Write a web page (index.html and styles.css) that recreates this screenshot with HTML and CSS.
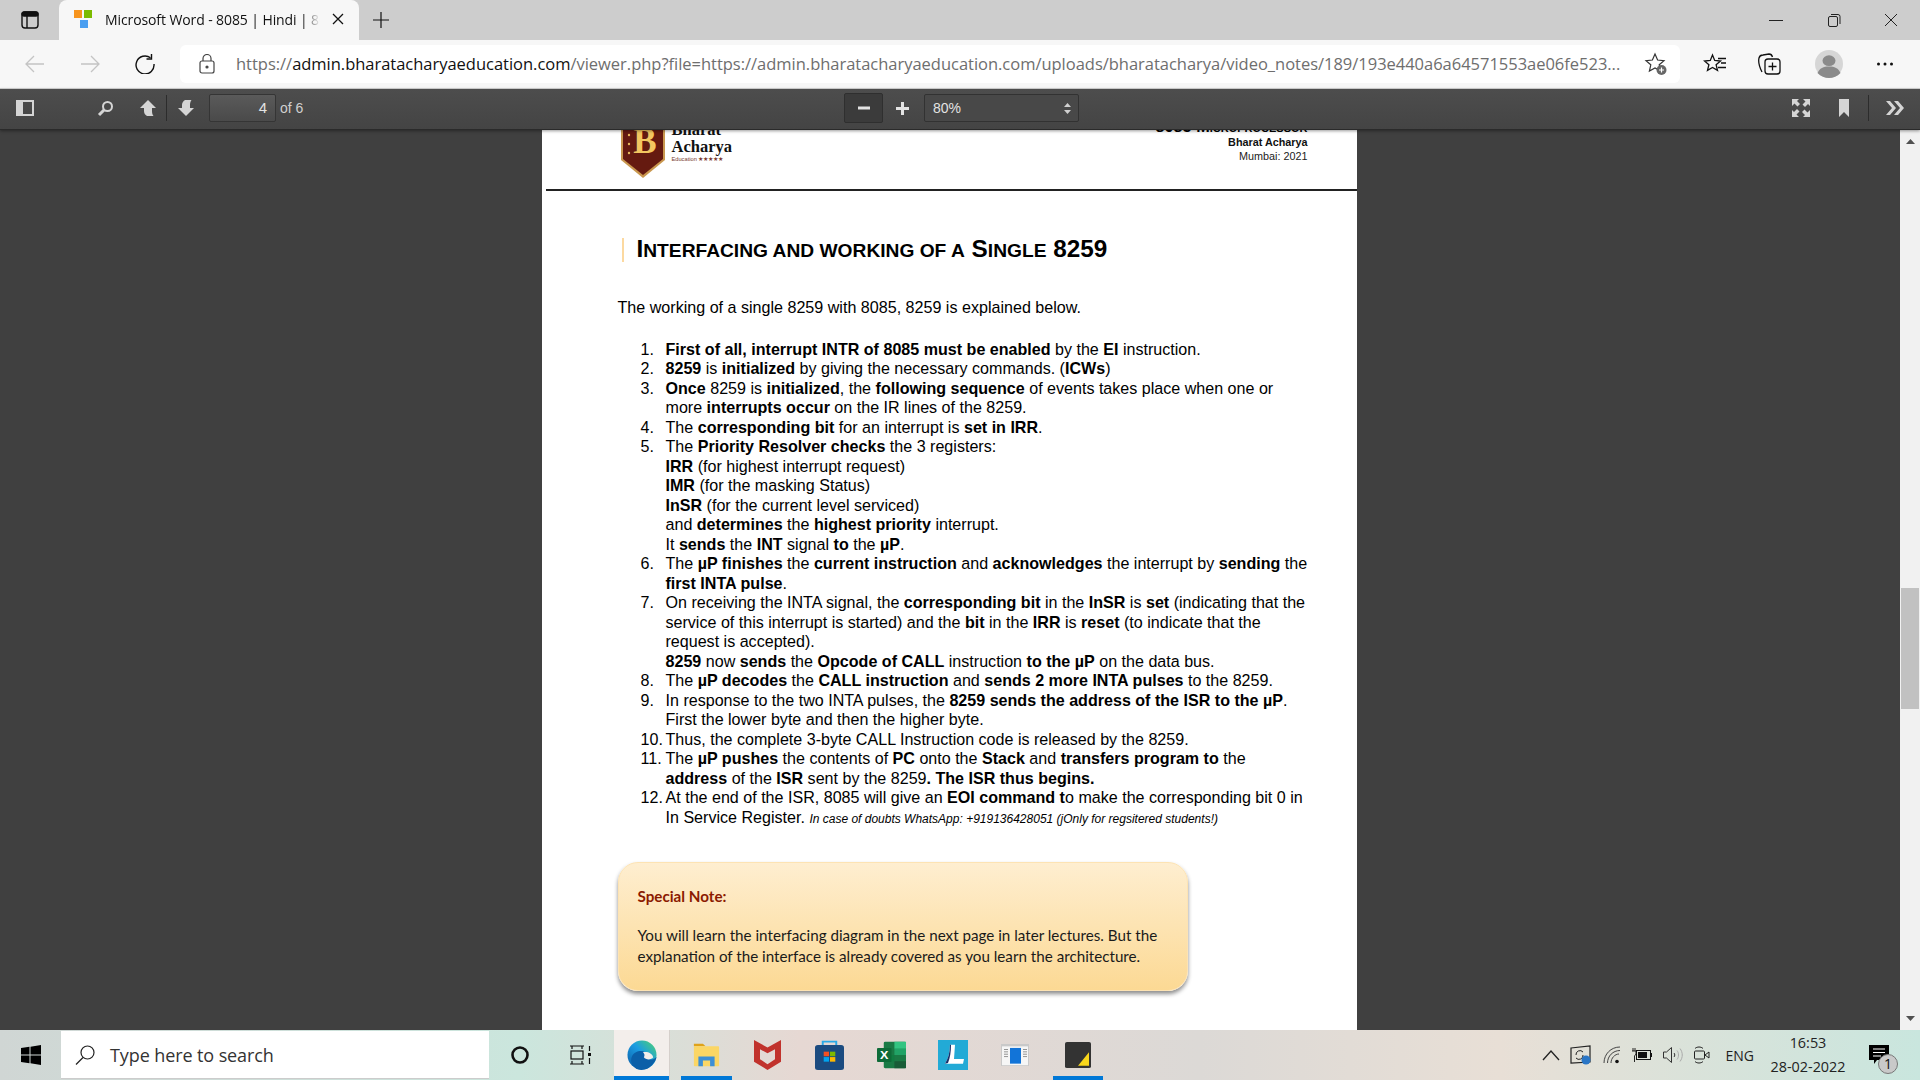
FILE: index.html
```html
<!DOCTYPE html>
<html lang="en">
<head>
<meta charset="utf-8">
<title>Microsoft Word - 8085 | Hindi</title>
<link rel="stylesheet" href="styles.css">
</head>
<body>
<div class="tabstrip">
  <div class="strip-btn">
    <svg width="18" height="18" viewBox="0 0 18 18" fill="none" stroke="#111" stroke-width="1.4"><rect x="1" y="1" width="16" height="16" rx="3"/><rect x="1" y="1" width="16" height="4" rx="2" fill="#111"/><path d="M6 4v13"/></svg>
  </div>
  <div class="tab">
    <svg class="favicon" width="18" height="18" viewBox="0 0 18 18"><rect width="8" height="8" fill="#f7941d"/><rect x="10" width="8" height="8" fill="#7cbb00"/><rect x="6" y="10" width="8" height="8" fill="#4a9ef0"/></svg>
    <span class="tab-title">Microsoft Word - 8085 | Hindi | 8085 Microprocessor</span>
    <svg width="12" height="12" viewBox="0 0 12 12" stroke="#111" stroke-width="1.3"><path d="M1 1l10 10M11 1L1 11"/></svg>
  </div>
  <div class="new-tab">
    <svg width="18" height="18" viewBox="0 0 18 18" stroke="#111" stroke-width="1.2"><path d="M9 1v16M1 9h16"/></svg>
  </div>
  <div class="window-btns">
    <svg width="14" height="14" viewBox="0 0 14 14" stroke="#222"><path d="M0 7.5h14"/></svg>
    <svg width="14" height="14" viewBox="0 0 14 14" fill="none" stroke="#222"><rect x="1.5" y="3.5" width="9" height="10" rx="1.5"/><path d="M4 1.5h7a2 2 0 0 1 2 2V11"/></svg>
    <svg width="14" height="14" viewBox="0 0 14 14" stroke="#222"><path d="M1 1l12 12M13 1L1 13"/></svg>
  </div>
</div>

<div class="navbar">
  <div class="nav-btns">
    <svg width="20" height="20" viewBox="0 0 20 20" fill="none" stroke="#c4c4c4" stroke-width="1.3"><path d="M19 10H1M9 2l-8 8 8 8"/></svg>
    <svg width="20" height="20" viewBox="0 0 20 20" fill="none" stroke="#c4c4c4" stroke-width="1.3"><path d="M1 10h18M11 2l8 8-8 8"/></svg>
    <svg width="20" height="20" viewBox="0 0 20 20" fill="none" stroke="#111" stroke-width="1.4"><path d="M15.5 3.8A9 9 0 1 0 19 10"/><path d="M16.5 0v5h-5"/></svg>
  </div>
  <div class="addressbar">
    <svg class="lock" width="16" height="20" viewBox="0 0 16 20" fill="none" stroke="#444" stroke-width="1.2"><rect x="1" y="7" width="14" height="12" rx="2"/><path d="M4 7V4.500a4 4 0 0 1 8 0V7"/><circle cx="8" cy="13" r="1" fill="#444"/></svg>
    <span class="url"><span class="url-dim">https://</span><span class="url-host">admin.bharatacharyaeducation.com</span><span class="url-dim">/viewer.php?file=https://admin.bharatacharyaeducation.com/uploads/bharatacharya/video_notes/189/193e440a6a64571553ae06fe523...</span></span>
    <svg class="star-add" width="24" height="24" viewBox="0 0 24 24" fill="none" stroke="#333" stroke-width="1.2"><path d="M11 2l2.600 6 6.400.6-4.800 4.200 1.400 6.200L11 16l-5.600 3 1.400-6.200L2 8.600 8.400 8z"/><circle cx="17.500" cy="18" r="5" fill="#666" stroke="none"/><path d="M17.500 15.500v5M15 18h5" stroke="#fff"/></svg>
  </div>
  <div class="nav-tools">
    <svg width="24" height="24" viewBox="0 0 24 24" fill="none" stroke="#111" stroke-width="1.3"><path d="M9.500 3l2.200 5.500 5.800.5-4.400 3.700 1.400 5.700-5-3-5 3 1.400-5.700L1.500 9l5.800-.5z"/><path d="M15 6.500h8M18 11h5M15 15.500h8"/></svg>
    <svg class="tool-collections" width="24" height="24" viewBox="0 0 24 24" fill="none" stroke="#111" stroke-width="1.3"><path d="M5 20C3 16 1 10 2 6c.5-2 2-3 4-3l6-1c2 0 3 1 3.500 3"/><rect x="8" y="7" width="15" height="15" rx="3" fill="#f7f7f7"/><path d="M15.500 10.500v8M11.500 14.500h8"/></svg>
    <svg class="tool-profile" width="28" height="28" viewBox="0 0 28 34" preserveAspectRatio="none"><ellipse cx="14" cy="17" rx="14" ry="17" fill="#d6d6d6"/><circle cx="14" cy="13" r="6.500" fill="#8a8a8a"/><path d="M2.500 28c2-6 6-8 11.500-8s9.500 2 11.500 8c-3 4-7.500 6-11.500 6s-8.500-2-11.500-6z" fill="#8a8a8a"/></svg>
    <svg width="18" height="4" viewBox="0 0 18 4" fill="#111"><circle cx="2.500" cy="2" r="1.500"/><circle cx="9" cy="2" r="1.500"/><circle cx="15.500" cy="2" r="1.500"/></svg>
  </div>
</div>

<div class="pdfbar">
  <svg class="pb-sidebar" width="18" height="16" viewBox="0 0 18 16"><rect x="1" y="1" width="16" height="14" fill="none" stroke="#d5d5d5" stroke-width="2"/><rect x="2" y="2" width="5" height="12" fill="#d5d5d5"/></svg>
  <svg class="pb-search" width="17" height="17" viewBox="0 0 17 17" fill="none" stroke="#d5d5d5"><circle cx="10.500" cy="6.500" r="4.500" stroke-width="2"/><path d="M7 10l-5 5" stroke-width="3"/></svg>
  <svg class="pb-up" width="18" height="18" viewBox="0 0 18 18" fill="#d5d5d5"><path d="M9 1l8 8h-4v3c0 2 .5 4 1.500 5H8c-2-1-3-3-3-5V9H1z"/></svg>
  <span class="pb-sep"></span>
  <svg class="pb-down" width="18" height="18" viewBox="0 0 18 18" fill="#d5d5d5"><path d="M9 17l8-8h-4V6c0-2 .5-4 1.500-5H8C6 2 5 4 5 6v3H1z"/></svg>
  <div class="page-input">4</div>
  <span class="page-of">of 6</span>
  <div class="zoom-out"><svg width="12" height="4" viewBox="0 0 12 4" fill="#e3e3e3"><rect width="12" height="3" y=".5"/></svg></div>
  <div class="zoom-in"><svg width="13" height="13" viewBox="0 0 13 13" fill="#e3e3e3"><path d="M5 0h3v5h5v3H8v5H5V8H0V5h5z"/></svg></div>
  <div class="zoom-select"><span>80%</span><svg width="7" height="11" viewBox="0 0 7 11" fill="#d0d0d0"><path d="M3.500 0L7 4H0zM3.500 11L0 7h7z"/></svg></div>
  <div class="pb-right">
    <svg width="18" height="18" viewBox="0 0 18 18" fill="#d5d5d5"><path d="M0 0h7L5 2l3 3-2.500 2.500L2.500 4.500 0 7zM18 0v7l-2-2-3 3-2.500-2.500 3-3L11 0zM0 18v-7l2 2 3-3 2.500 2.500-3 3L7 18zM18 18h-7l2-2-3-3 2.500-2.500 3 3L18 11z"/></svg>
    <svg class="pb-bookmark" width="12" height="18" viewBox="0 0 12 18" fill="#d5d5d5"><path d="M1 0h10v18l-5-5-5 5z"/></svg>
    <span class="pb-sep"></span>
    <svg class="pb-more" width="18" height="16" viewBox="0 0 18 16" fill="#d5d5d5"><path d="M0 1h4l6 7-6 7H0l6-7zM8 1h4l6 7-6 7H8l6-7z"/></svg>
  </div>
</div>

<div class="viewer">
  <main class="canvas">
    <article class="page">
      <header class="page-head">
        <div class="brand">
          <svg width="44" height="68" viewBox="0 0 44 68"><path d="M0 0h44v50L22 68 0 50z" fill="#c9974e"/><path d="M2 0h40v49L22 65 2 49z" fill="#651a10"/><circle cx="8" cy="34" r="1.200" fill="#e8b95e"/><circle cx="8" cy="25" r="1.200" fill="#e8b95e"/><circle cx="8" cy="43" r="1.200" fill="#e8b95e"/><text x="24" y="43" text-anchor="middle" class="logo-b">B</text></svg>
          <div class="brand-text">
            <div>Bharat</div>
            <div>Acharya</div>
            <div class="brand-sub">Education ★★★★★</div>
          </div>
        </div>
        <div class="head-right">
          <div class="head-title">8085 Microprocessor</div>
          <div class="head-name">Bharat Acharya</div>
          <div>Mumbai: 2021</div>
        </div>
      </header>
      <h1 class="title">I<span class="sc">nterfacing and working of a</span> S<span class="sc">ingle</span> 8259</h1>
      <p class="intro">The working of a single 8259 with 8085, 8259 is explained below.</p>
      <ol class="steps">
        <li><span class="n">1.</span><div><b>First of all, interrupt INTR of 8085 must be enabled</b> by the <b>EI</b> instruction.</div></li>
        <li><span class="n">2.</span><div><b>8259</b> is <b>initialized</b> by giving the necessary commands. (<b>ICWs</b>)</div></li>
        <li><span class="n">3.</span><div><b>Once</b> 8259 is <b>initialized</b>, the <b>following sequence</b> of events takes place when one or<br>more <b>interrupts occur</b> on the IR lines of the 8259.</div></li>
        <li><span class="n">4.</span><div>The <b>corresponding bit</b> for an interrupt is <b>set in IRR</b>.</div></li>
        <li><span class="n">5.</span><div>The <b>Priority Resolver checks</b> the 3 registers:<br><b>IRR</b> (for highest interrupt request)<br><b>IMR</b> (for the masking Status)<br><b>InSR</b> (for the current level serviced)<br>and <b>determines</b> the <b>highest priority</b> interrupt.<br>It <b>sends</b> the <b>INT</b> signal <b>to</b> the <b>µP</b>.</div></li>
        <li><span class="n">6.</span><div>The <b>µP finishes</b> the <b>current instruction</b> and <b>acknowledges</b> the interrupt by <b>sending</b> the<br><b>first INTA pulse</b>.</div></li>
        <li><span class="n">7.</span><div>On receiving the INTA signal, the <b>corresponding bit</b> in the <b>InSR</b> is <b>set</b> (indicating that the<br>service of this interrupt is started) and the <b>bit</b> in the <b>IRR</b> is <b>reset</b> (to indicate that the<br>request is accepted).<br><b>8259</b> now <b>sends</b> the <b>Opcode of CALL</b> instruction <b>to the µP</b> on the data bus.</div></li>
        <li><span class="n">8.</span><div>The <b>µP decodes</b> the <b>CALL instruction</b> and <b>sends 2 more INTA pulses</b> to the 8259.</div></li>
        <li><span class="n">9.</span><div>In response to the two INTA pulses, the <b>8259 sends the address of the ISR to the µP</b>.<br>First the lower byte and then the higher byte.</div></li>
        <li><span class="n">10.</span><div>Thus, the complete 3-byte CALL Instruction code is released by the 8259.</div></li>
        <li><span class="n">11.</span><div>The <b>µP pushes</b> the contents of <b>PC</b> onto the <b>Stack</b> and <b>transfers program to</b> the<br><b>address</b> of the <b>ISR</b> sent by the 8259<b>. The ISR thus begins.</b></div></li>
        <li><span class="n">12.</span><div>At the end of the ISR, 8085 will give an <b>EOI command t</b>o make the corresponding bit 0 in<br>In Service Register. <i class="small">In case of doubts WhatsApp: +919136428051 (jOnly for regsitered students!)</i></div></li>
      </ol>
      <aside class="note">
        <div class="note-head">Special Note:</div>
        <p>You will learn the interfacing diagram in the next page in later lectures. But the<br>explanation of the interface is already covered as you learn the architecture.</p>
      </aside>
    </article>
  </main>
  <div class="scrollbar">
    <svg width="9" height="5" viewBox="0 0 9 5" fill="#505050"><path d="M4.500 0L9 5H0z"/></svg>
    <div class="scroll-track"><div class="thumb"></div></div>
    <svg width="9" height="5" viewBox="0 0 9 5" fill="#505050"><path d="M4.500 5L0 0h9z"/></svg>
  </div>
</div>

<footer class="taskbar">
  <div class="start"><svg width="20" height="20" viewBox="0 0 20 20" fill="#000"><path d="M0 3l8.500-1.200v7.700H0zM9.500 1.700L20 0v9.500H9.500zM0 10.500h8.500v7.700L0 17zM9.500 10.500H20V20L9.500 18.300z"/></svg></div>
  <div class="searchbox">
    <svg width="20" height="20" viewBox="0 0 20 20" fill="none" stroke="#222" stroke-width="1.200"><circle cx="12.500" cy="7.500" r="6.500"/><path d="M8 12.500L1 19.500"/></svg>
    <span>Type here to search</span>
  </div>
  <div class="tb-fixed tb-cortana"><svg width="20" height="20" viewBox="0 0 20 20" fill="none" stroke="#111" stroke-width="2.600"><circle cx="10" cy="10" r="7.500"/></svg></div>
  <div class="tb-fixed tb-view"><svg width="24" height="20" viewBox="0 0 24 20" fill="none" stroke="#111" stroke-width="1.200"><path d="M1 1h14M1 19h14M3 1v3M13 1v3M3 16v3M13 16v3"/><rect x="2" y="6" width="12" height="8"/><path d="M20.500 1v5M20.500 13v6"/><rect x="19" y="8" width="3" height="3" fill="#111" stroke="none"/></svg></div>
  <div class="app active-tile"><svg width="30" height="30" viewBox="0 0 32 32"><defs><linearGradient id="eg" x1="0" y1="1" x2="1" y2="0"><stop offset="0" stop-color="#0c59a4"/><stop offset=".55" stop-color="#1b9de2"/><stop offset="1" stop-color="#52d66a"/></linearGradient></defs><circle cx="16" cy="16" r="15.500" fill="url(#eg)"/><path d="M12 31.500C6 29 3 23 5 18c2-5 8-7 12-6s5 5 3 7c3 3 9 2 11.500-1-1 6-7 12-13 13.500-2 .5-4.500.500-6.500 0z" fill="#0b5fa8"/><path d="M17 13c5-1 10 1 11 5.500-2 3-8 3-10 0 1-2 1-3.500-1-5.500z" fill="#f3eeeb"/></svg></div>
  <div class="app running"><svg width="27" height="24" viewBox="0 0 30 30" preserveAspectRatio="none"><path d="M1 1h10l3 3H1z" fill="#dfa21a"/><rect x="1" y="4" width="28" height="25" rx="1" fill="#fbd665"/><path d="M6 29V17h18v12h-5v-7h-8v7z" fill="#3d8fd6"/></svg></div>
  <div class="app"><svg width="27" height="30" viewBox="0 0 27 36" preserveAspectRatio="none"><path fill-rule="evenodd" d="M0 0l13.500 9L27 0v26L13.500 36 0 26zM6 11v12l7.500 6 7.500-6V11l-7.500 5z" fill="#c1322c"/></svg></div>
  <div class="app"><svg width="29" height="30" viewBox="0 0 30 36" preserveAspectRatio="none"><path d="M8 6V2h14v4" fill="none" stroke="#2aa9e6" stroke-width="2"/><rect y="6" width="30" height="30" rx="3" fill="#1b4b80"/><rect x="9" y="14" width="5.500" height="5.500" fill="#f25022"/><rect x="15.500" y="14" width="5.500" height="5.500" fill="#7fba00"/><rect x="9" y="20.500" width="5.500" height="5.500" fill="#00a4ef"/><rect x="15.500" y="20.500" width="5.500" height="5.500" fill="#ffb900"/></svg></div>
  <div class="app"><svg width="29" height="28" viewBox="0 0 30 36" preserveAspectRatio="none"><rect x="7" y="1" width="23" height="34" rx="1.500" fill="#1a7a45"/><rect x="18" y="1" width="12" height="9" fill="#33c481"/><rect x="18" y="10" width="12" height="8" fill="#21a366"/><rect x="7" y="18" width="11" height="8" fill="#107c41"/><rect x="18" y="26" width="12" height="9" fill="#185c37"/><rect y="9" width="15" height="18" rx="1" fill="#0e6b38"/><text x="7.500" y="23" text-anchor="middle" class="x-glyph">X</text></svg></div>
  <div class="app"><svg width="30" height="30" viewBox="0 0 30 38" preserveAspectRatio="none"><rect width="30" height="38" fill="#22aad6"/><path d="M12 6h5l-1 18h10l-1 6H7c3-6 5-14 5-24z" fill="#fff"/><path d="M12 6c0 10-2 18-5 24l3-1c2-6 3-14 3-23z" fill="#17306b"/></svg></div>
  <div class="app"><svg width="28" height="22" viewBox="0 0 28 28" preserveAspectRatio="none"><rect width="28" height="28" fill="#c9c9c9"/><rect x="1" y="3" width="26" height="24" fill="#f6f6f6"/><rect x="9" y="5" width="11" height="20" fill="#1274d8"/><path d="M3 7h4M3 10h4M3 13h4M3 16h4M22 7h4M22 10h4M22 13h4M22 16h4" stroke="#888"/></svg></div>
  <div class="app running-wide"><svg width="26" height="26" viewBox="0 0 26 33" preserveAspectRatio="none"><rect width="26" height="33" rx="2" fill="#333"/><path d="M13 30L24 13v17z" fill="#f9d71c"/></svg></div>
  <div class="tray">
    <svg width="20" height="12" viewBox="0 0 20 12" fill="none" stroke="#222" stroke-width="1.300"><path d="M2 11l8-9 8 9"/></svg>
    <svg class="tray-monitor" width="22" height="20" viewBox="0 0 22 20"><path d="M1 3l19-2v16l-19 1z" fill="none" stroke="#222" stroke-width="1.200"/><path d="M6 10a4 4 0 0 1 7-3M13 10a4 4 0 0 1-7 3" fill="none" stroke="#222"/><circle cx="16" cy="15" r="4.500" fill="#2a76c6"/></svg>
    <svg width="18" height="18" viewBox="0 0 18 18" fill="none" stroke="#444"><path d="M1 17C1 8 8 1 17 1M4.500 17C4.500 10 10 4.500 17 4.500M8 17c0-5 4-9 8-9"/><circle cx="14" cy="15.500" r="1.800" fill="#111" stroke="none"/></svg>
    <svg width="20" height="14" viewBox="0 0 20 14"><path d="M3 0v3M1 0v3M0 3h4v3L2.500 8v6" fill="none" stroke="#111" stroke-width=".9"/><rect x="4.500" y="2.500" width="14" height="9" fill="none" stroke="#111"/><rect x="6" y="4" width="9" height="6" fill="#111"/><rect x="19" y="5" width="1" height="4" fill="#111"/></svg>
    <svg width="20" height="18" viewBox="0 0 20 18" fill="none" stroke="#333"><path d="M.5 6v6h3l5 4.500v-15l-5 4.500z"/><path d="M11 7c1 1 1 3 0 4"/><path d="M14 4.500c2 2.500 2 6.500 0 9M17 2.500c3 4 3 9 0 13" stroke="#aaa"/></svg>
    <svg width="16" height="18" viewBox="0 0 16 18" fill="none" stroke="#222"><path d="M1 2.500C3 .5 7 .5 9 2.500M1 15.500c2 2 6 2 8 0"/><rect x=".5" y="5" width="10" height="8" rx="1"/><path d="M11 9l4-3v6z"/></svg>
    <span class="lang">ENG</span>
    <div class="clock"><div>16:53</div><div>28-02-2022</div></div>
    <div class="notif">
      <svg width="20" height="20" viewBox="0 0 20 20"><path d="M0 0h20v15H8l-3 4v-4H0z" fill="#000"/><path d="M4 4h12M4 7.500h12M4 11h8" stroke="#fff"/></svg>
      <span class="notif-badge">1</span>
    </div>
  </div>
</footer>
</body>
</html>
```

FILE: styles.css
```css
* { box-sizing: border-box; }
html, body { margin: 0; height: 100%; }
body {
  width: 1920px; height: 1080px; overflow: hidden;
  display: flex; flex-direction: column;
  font-family: "Liberation Sans", Arial, sans-serif;
  background: #404040;
}
svg { display: block; flex: none; }

/* tab strip */
.tabstrip { height: 40px; flex: none; background: #cdcdcd; display: flex; align-items: stretch; }
.strip-btn { width: 59px; display: flex; align-items: center; justify-content: center; padding-left: 1px; }
.tab {
  width: 300px; background: #f7f7f7; border-radius: 8px 8px 0 0;
  display: flex; align-items: center; padding: 0 15px 2px 15px;
}
.favicon { margin-right: 13px; }
.tab-title {
  width: 215px; margin-right: 12px; white-space: nowrap; overflow: hidden;
  font: 14px "Open Sans", sans-serif; color: #111; letter-spacing: -.1px;
  -webkit-mask-image: linear-gradient(90deg, #000 92%, transparent);
  mask-image: linear-gradient(90deg, #000 92%, transparent);
}
.new-tab { width: 44px; display: flex; align-items: center; justify-content: center; }
.window-btns { margin-left: auto; display: flex; align-items: center; gap: 43.500px; padding-right: 22px; }

/* nav bar */
.navbar { height: 48px; flex: none; background: #f7f7f7; display: flex; align-items: center; }
.nav-btns { width: 180px; display: flex; gap: 35px; padding-left: 25px; }
.addressbar {
  width: 1500px; height: 38px; background: #fff; border-radius: 6px;
  display: flex; align-items: center; padding: 0 12px 0 19px;
}
.lock { margin-right: 21px; }
.url { flex: 1; white-space: nowrap; overflow: hidden; padding-bottom: 2px; font: 16.500px "Open Sans", sans-serif; letter-spacing: -.02px; }
.url-dim { color: #6e6e6e; }
.url-host { color: #111; }
.nav-tools { flex: 1; display: flex; align-items: center; justify-content: space-between; padding: 0 26px 0 23px; }
.tool-collections { margin-right: 3px; }
.tool-profile { margin-right: 3px; }

/* pdf toolbar */
.pdfbar {
  height: 41px; flex: none; display: flex; align-items: center; position: relative; z-index: 2;
  padding-bottom: 2px;
  background: linear-gradient(#4d4d4d, #444); box-shadow: 0 1px 0 #2a2a2a, 0 2px 3px rgba(0,0,0,.4);
  border-top: 1px solid #c8c8c8; color: #e3e3e3; font-size: 14px;
}
.pb-sidebar { margin-left: 16px; }
.pb-search { margin-left: 63px; }
.pb-up { margin-left: 25px; }
.pb-sep { width: 1px; height: 26px; background: #2c2c2c; margin: 0 10px 0 9px; }
.page-input {
  width: 67px; height: 28px; margin-left: 14px; padding-right: 8px; text-align: right; line-height: 26px;
  background: linear-gradient(#5a5a5a, #4a4a4a); border: 1px solid #353535; border-radius: 2px; font-size: 15px;
}
.page-of { margin-left: 4px; width: 61px; color: #d0d0d0; }
.zoom-out {
  margin-left: 503px; width: 39px; height: 30px; background: #3b3b3b; border: 1px solid #2f2f2f;
  border-radius: 2px; display: flex; align-items: center; justify-content: center;
}
.zoom-in { width: 41px; display: flex; justify-content: center; padding-right: 3px; }
.zoom-select {
  width: 155px; height: 28px; background: #484848; border: 1px solid #323232; border-radius: 2px;
  display: flex; align-items: center; justify-content: space-between; padding: 0 7px 0 8px; font-size: 14px;
}
.pb-right { margin-left: auto; display: flex; align-items: center; padding-right: 16px; }
.pb-bookmark { margin-left: 28px; }
.pb-right .pb-sep { margin: 0 17px 0 18.500px; }

/* viewer */
.viewer { flex: 1; min-height: 0; display: flex; justify-content: space-between; overflow: hidden; background: #404040; }
.canvas { width: 1898px; display: flex; justify-content: center; overflow: hidden; }
.page { width: 815px; background: #fff; color: #000; height: 1000px; }
.page-head {
  margin: -26px 0 0 4px; height: 88px; border-bottom: 2px solid #222;
  display: flex; justify-content: space-between; padding: 0 49px 0 75px;
}
.brand { display: flex; gap: 7px; padding-top: 7px; }
.logo-b { font: bold 35px "Liberation Serif", serif; fill: #f3c660; }
.x-glyph { font: bold 13px "Liberation Sans", sans-serif; fill: #fff; }
.brand-text { font: bold 16.500px/17px "Liberation Serif", serif; padding-top: 10.500px; color: #111; }
.brand-sub { font: 5.700px/10px "Liberation Sans", sans-serif; color: #7a3a30; margin-top: -.5px; }
.head-right { text-align: right; font-size: 10.800px; line-height: 13.500px; padding-top: 19px; color: #222; }
.head-title { font-weight: bold; font-variant: small-caps; font-size: 16.300px; line-height: 14px; color: #000; margin: -3px 0 3px; }
.head-name { font-weight: bold; color: #111; }

.title {
  margin: 47px 0 0 80px; padding-left: 13px; border-left: 2px solid #fcd9a0;
  font-size: 24.300px; line-height: 22px; font-weight: bold;
}
.sc { font-size: 19.200px; text-transform: uppercase; }
.intro { margin: 34.500px 0 0 76px; font-size: 16.100px; line-height: 20px; }
.steps { list-style: none; margin: 23.300px 0 0 98px; padding: 0; font-size: 16.080px; line-height: 19.500px; width: 680px; white-space: nowrap; }
.steps li { display: flex; }
.n { width: 26px; flex: none; padding-left: 1px; }
.small { font-size: 12px; }

.note {
  width: 570px; height: 129px; margin: 32.500px 0 0 76px; padding: 23px 19px 0;
  border-radius: 20px; border: 1px solid #fde3b3;
  background: linear-gradient(#feeed0, #fcd994);
  box-shadow: 0 3px 4px rgba(0,0,0,.45);
  font: 15.200px/20.500px Lato, sans-serif; color: #1a1a1a;
}
.note-head { font-weight: bold; color: #8b1a00; }
.note p { margin: 19px 0 0; }

/* scrollbar */
.scrollbar { width: 20px; flex: none; background: #f1f1f1; display: flex; flex-direction: column; align-items: center; padding: 10px 0 9px; }
.scroll-track { flex: 1; width: 100%; padding-top: 444px; }
.thumb { height: 121px; margin: 0 1px; background: #c1c1c1; }

/* taskbar */
.taskbar {
  height: 50px; flex: none; display: flex; align-items: stretch;
  background: linear-gradient(90deg, #d0d6d4 0, #cbe6dd 520px, #e6d8d3 800px, #dcd9d6 1200px, #e8dfd6 1500px, #c9e6de 1920px);
}
.start { width: 61px; display: flex; align-items: center; justify-content: center; padding-left: 1px; }
.searchbox {
  width: 428px; margin: 1px 0; background: #fff; display: flex; align-items: center; gap: 15px; padding-left: 14px;
  font: 18px "Open Sans", sans-serif; color: #333; letter-spacing: -.1px; border-bottom: 1px solid #ccc;
}
.tb-fixed { display: flex; align-items: center; justify-content: center; }
.tb-cortana { width: 62px; }
.tb-view { width: 60px; margin-right: 3px; }
.app { width: 62px; display: flex; align-items: center; justify-content: center; position: relative; }
.active-tile { width: 56px; margin-right: 11px; padding-left: 1px; background: #f3eeeb; border-right: 1px solid #d5cfcb; box-shadow: inset 0 -4px 0 #0078d7; }
.running { width: 51px; box-shadow: inset 0 -4px 0 #0078d7; margin-right: 4px; }
.running-wide { width: 50px; margin-left: 7px; box-shadow: inset 0 -4px 0 #0078d7; }
.tray { margin-left: auto; display: flex; align-items: center; color: #222; }
.tray > svg { margin-left: 11px; }
.tray > .tray-monitor { margin-left: 9px; }
.lang { margin-left: 16px; font: 14px "Open Sans", sans-serif; }
.clock { margin-left: 15px; width: 78px; text-align: center; font: 14.400px/24px "Open Sans", sans-serif; }
.notif { position: relative; margin-left: 22px; width: 51px; height: 40px; padding-top: 10px; }
.notif-badge {
  position: absolute; left: 9px; top: 19px; width: 20px; height: 20px; border-radius: 50%;
  background: #c9c9c9; border: 1px solid #777; text-align: center; font: 14px/18px "Open Sans", sans-serif; color: #111;
}
```
